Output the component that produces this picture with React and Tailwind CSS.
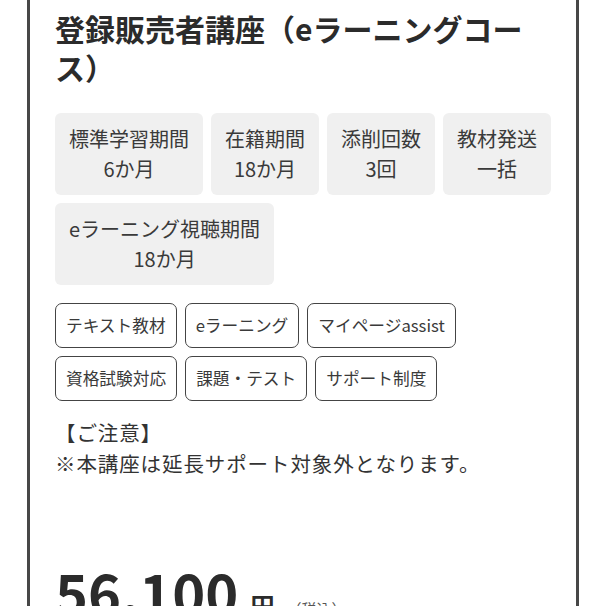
import React from 'react';

const stats = [
  { label: '標準学習期間', value: '6か月' },
  { label: '在籍期間', value: '18か月' },
  { label: '添削回数', value: '3回' },
  { label: '教材発送', value: '一括' },
  { label: 'eラーニング視聴期間', value: '18か月' },
];

const tags = ['テキスト教材', 'eラーニング', 'マイページassist', '資格試験対応', '課題・テスト', 'サポート制度'];

const App = () => {
  return (
    <div
      className="min-h-screen bg-white px-[27px] text-[#333]"
      style={{ fontFamily: '"Noto Sans CJK JP", "Noto Sans", sans-serif' }}
    >
      <div className="border-x-[3px] border-[#474747] px-[25px] pt-[9px] pb-10">
        {/* タイトル */}
        <h1 className="text-[30px] font-bold leading-[39px] text-[#2b2b2b]">
          登録販売者講座（eラーニングコース）
        </h1>

        {/* 期間など */}
        <div className="mt-[26px] flex flex-wrap gap-2">
          {stats.map((s) => (
            <div key={s.label} className="rounded-md bg-[#f0f0f0] px-[14px] py-[11px] text-center text-[20px] leading-[30px] text-[#3a3a3a]">
              <div>{s.label}</div>
              <div>{s.value}</div>
            </div>
          ))}
        </div>

        {/* タグ */}
        <div className="mt-[18px] flex w-[420px] flex-wrap gap-2">
          {tags.map((t) => (
            <span key={t} className="rounded-[7px] border-[1.5px] border-[#444] px-[10px] py-[11px] text-[16.7px] leading-[21px] text-[#3a3a3a]">
              {t}
            </span>
          ))}
        </div>

        {/* 注意 */}
        <div className="mt-[16px] text-[20.5px] leading-[31px] tracking-[0.9px] text-[#333]">
          <p>【ご注意】</p>
          <p>※本講座は延長サポート対象外となります。</p>
        </div>

        {/* 価格 */}
        <div className="mt-[84px] flex items-baseline gap-3 text-[#2b2b2b]">
          <span className="text-[56px] font-bold leading-[56px]">56,100</span>
          <span className="text-[24px] font-bold">円</span>
          <span className="text-[15px] text-[#555]">（税込）</span>
        </div>
      </div>
    </div>
  );
};

export default App;
